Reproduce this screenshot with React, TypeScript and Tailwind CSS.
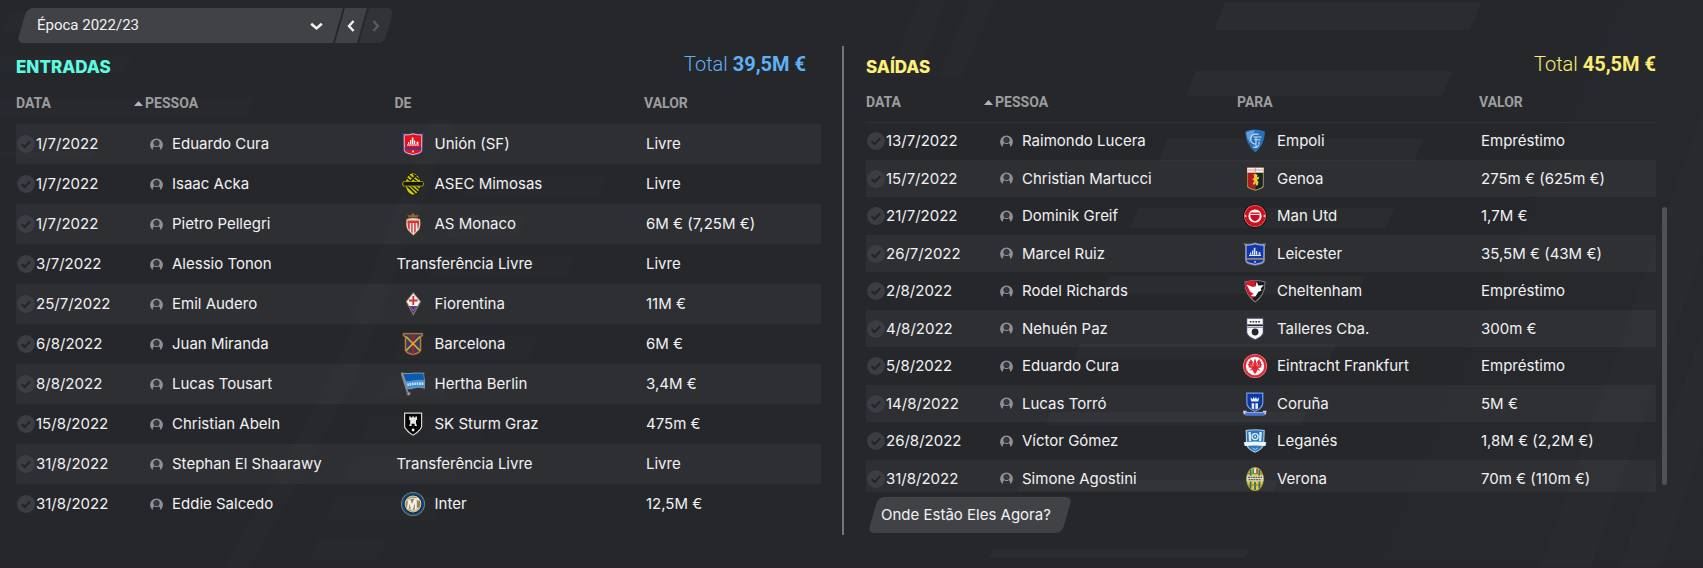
import { useState, type ReactNode } from "react";

const crests: Record<string, ReactNode> = {
  union: (
    <>
      <path d="M.6 1 Q7 2.6 12 .4 Q17 2.6 23.4 1 L21.8 4 V18.6 Q21.6 21.2 18 22.2 L12 23.8 L6 22.2 Q2.4 21.2 2.2 18.6 V4 Z" fill="#2f3fa8" />
      <path d="M3.2 2.8 Q8 3.4 12 1.8 Q16 3.4 20.8 2.8 L20.6 18.4 Q20.2 20.4 17.4 21.2 L12 22.6 L6.6 21.2 Q3.8 20.4 3.4 18.4 Z" fill="#e11219" stroke="#f3b8bd" strokeWidth="1" />
      <path d="M3.6 15.4 H20.4 V17.4 H3.6 Z" fill="#3140a6" />
      <path d="M6 13.6 V12.4 H18 V13.6 Z M7 12 V10 H8.2 V12 Z M9 12 V8 H10.2 V12 Z M10.8 12 V5.4 H12.4 V12 Z M13 12 V8.6 H14.2 V12 Z M15.6 12 V9.8 H17.4 V12 Z" fill="#fff" />
      <circle cx="12" cy="19.4" r="1" fill="#fff" />
    </>
  ),
  asec: (
    <>
      <ellipse cx="12" cy="12" rx="8" ry="11.5" fill="#1b1c08" />
      <ellipse cx="12" cy="12" rx="7.3" ry="10.7" fill="#c9c312" />
      <path d="M8 3.2 L16.5 10 M6 6 L10.5 10 M12 2 L18 7.5 M6 14 L14.5 22 M10 14 L17 20 M14.5 14 L18.5 17.5 M8.8 9.8 L15.5 2.8 M14 21.6 L7.5 15" stroke="#1b1c08" strokeWidth="1.4" fill="none" />
      <path d="M2 9.2 H22 L23 12 L22 14.4 H2 L1 12 Z" fill="#a6a010" />
      <path d="M2.4 10 H21.8 V13.6 H2.4 Z" fill="#15160a" />
    </>
  ),
  monaco: (
    <>
      <path d="M7.6 5.6 L6.4 2.8 L9.4 3.8 L12 .8 L14.6 3.8 L18 2.8 L16.6 5.6 Z" fill="#8a6a35" />
      <circle cx="9" cy="3.6" r=".9" fill="#c0342f" />
      <circle cx="15.4" cy="3.6" r=".9" fill="#c0342f" />
      <path d="M5.6 7 Q12 5.2 19 7 Q20.4 14 17.8 18 L12.3 23.6 L6.8 18 Q4.2 14 5.6 7 Z" fill="#d8c38d" />
      <path d="M6.6 8 Q12 6.6 18 8 Q19 14 17 17.4 L12.3 22.2 L7.6 17.4 Q5.6 14 6.6 8 Z" fill="#f1e9e7" />
      <path d="M6.6 8.6 H18 V11 H6.4 Z M6.6 11 H8.7 V18.4 L7.2 16.6 Z M10.2 11 H11.6 V21.4 L10.2 20 Z M13.2 11 H14.7 V19.6 L13.2 21 Z M16.2 11 H18.1 Q18 15 16.6 17.4 Z" fill="#d9323c" />
    </>
  ),
  fiorentina: (
    <>
      <path d="M12.3 0 L20.2 9.4 L12.3 23.8 L4.6 9.4 Z" fill="#8b7d62" />
      <path d="M12.3 1.4 L19 9.4 L16.4 14 H8.2 L5.8 9.4 Z" fill="#f5f2f0" />
      <path d="M8.4 14.2 H16.2 L12.3 21.8 Z" fill="#4b3a86" />
      <path d="M11.4 4 H13.2 V7.6 H16.6 V9.4 H13.2 V13 H11.4 V9.4 H8 V7.6 H11.4 Z" fill="#d92b33" />
      <path d="M9.6 15.2 L12.3 18.8 L15 15.2" stroke="#8a83a8" fill="none" strokeWidth=".8" />
    </>
  ),
  barcelona: (
    <>
      <path d="M1.6 .8 H22.2 L22.4 4 L20.6 5 V18 Q20 22.4 12 23.4 Q4 22.4 3.4 18 V5 L1.4 4 Z" fill="#8e3a44" />
      <path d="M2.8 1.8 H21 V3.8 L19.4 4.8 V17.8 Q18.6 21 12 22.2 Q5.4 21 4.6 17.8 V4.8 L2.8 3.8 Z" fill="#35405e" stroke="#b38b2c" strokeWidth="1.1" />
      <path d="M10.6 2.4 H13.4 V21.6 H10.6 Z" fill="#9c2330" />
      <path d="M5 4.6 L19 18.6 M19 4.6 L5 18.6" stroke="#d6aa2e" strokeWidth="1.6" />
    </>
  ),
  hertha: (
    <>
      <path d="M.4 1 L7 21.8" stroke="#8b9097" strokeWidth="1.6" />
      <path d="M0 .6 Q6 1.4 11 .8 Q18 .2 23.4 .8 Q22.6 4 24 8 L24 16.8 Q18 14.8 13 16.4 Q9.5 17.6 6 17.2 Z" fill="#8a8f96" />
      <path d="M2.4 1.8 Q8 2.4 12 1.8 Q18 1.2 22.4 1.8 L23 8 Q17 7 11 8.8 Q7 9.4 4.6 8.8 Z" fill="#0a5cb0" />
      <path d="M4.8 9 Q9 9.6 12 8.8 Q18 7.2 23 8.6 L23.2 15.2 Q17 14 12.4 15.6 Q9 16.6 6.8 16 Z" fill="#3f92d8" />
      <path d="M6.4 12.8 Q12 11.4 22.4 11.6" stroke="#cfe6f7" strokeWidth="2.6" strokeDasharray="1.6 .8" fill="none" />
      <circle cx="7.6" cy="21.6" r="2.1" fill="#6d7277" />
      <circle cx="7.6" cy="21.6" r=".9" fill="#b9bcc0" />
    </>
  ),
  sturm: (
    <>
      <path d="M3 .6 H21.2 V15 Q19 20 12.1 23.8 Q5.2 20 3 15 Z" fill="#d6d6d6" />
      <path d="M4.2 1.8 H20 V14.8 Q17.8 19.2 12.1 22.4 Q6.4 19.2 4.2 14.8 Z" fill="#050505" />
      <path d="M8.2 4.4 H9.8 V5.6 H11.2 V4.4 H13 V5.6 H14.4 V4.4 H16 V8 H15 V11.4 L16.2 14 H13.6 V11.8 H10.6 V14 H8 L9.2 11.4 V8 H8.2 Z" fill="#e6e6e6" />
      <circle cx="12.1" cy="18" r="1.4" fill="#f2f2f2" />
    </>
  ),
  inter: (
    <>
      <circle cx="12" cy="12" r="12" fill="#8f8a6b" />
      <circle cx="12" cy="12" r="11.2" fill="#0b4d8a" />
      <circle cx="12" cy="12" r="9.4" fill="#15202d" />
      <circle cx="12" cy="12" r="8.4" fill="#d8cfb6" />
      <circle cx="12" cy="12" r="7.4" fill="#93845d" />
      <path d="M6 16.4 L7 7.4 H9.4 L11 12 L13.6 6 H18 V8 H15.8 V18.6 H13.8 V11 L11.8 17.6 H10 L8.6 11.6 L7.8 17.4 Z" fill="#f4f0e4" />
      <path d="M6 8.6 Q12 3.6 18 8.6 M6.4 15.6 Q12 21 17.6 15.6" stroke="#e4dcc6" strokeWidth="1.1" fill="none" />
    </>
  ),
  empoli: (
    <>
      <path d="M2.2 2.6 Q12 -1.4 22 2.6 Q21.6 16 12.4 23.6 Q3 16 2.2 2.6 Z" fill="#2a6fb8" />
      <path d="M3.2 3.4 Q8 1 12 1.2 L7 14 Q3.6 9 3.2 3.4 Z" fill="#5fa2dc" />
      <path d="M15.6 5.4 Q8 4 7.6 9.6 Q7.6 15 13 15.2 M10.4 8 H18.4 M11.2 10.8 H17.6 M13 8 V19 M10 17.8 Q13 19.6 15.8 16.4 M16 12.6 V15.8" stroke="#c4def3" strokeWidth="1.1" fill="none" />
    </>
  ),
  genoa: (
    <>
      <path d="M4 .6 H20.8 V19.4 Q20 21.8 12.3 23.8 Q4.6 21.8 4 19.4 Z" fill="#a79043" />
      <path d="M4.2 .8 H20.6 V5.4 H4.2 Z" fill="#f4eeee" />
      <path d="M4.2 3 H20.6 M12.3 .8 V5" stroke="#e0888c" strokeWidth=".9" />
      <path d="M4.8 6 H12.3 V22.6 Q5.4 20.8 4.8 18.8 Z" fill="#ae1b22" />
      <path d="M12.3 6 H19.8 V18.8 Q19.2 20.8 12.3 22.6 Z" fill="#0e2430" />
      <path d="M10.6 7.6 L12.4 6.8 L14.6 8 L14 10.2 L16.4 9.6 L15.6 12.2 L14 12.8 L15.6 15.2 L14.6 18.4 H12.8 L13 16 L11 18 L9.6 16.4 L11.6 14 L9.2 12.2 L11.2 11 Z" fill="#f0c62d" />
    </>
  ),
  manutd: (
    <>
      <circle cx="12" cy="12" r="12" fill="#191214" />
      <circle cx="12" cy="12" r="11" fill="#e06a72" />
      <circle cx="12" cy="12" r="10.3" fill="#cf0f1d" />
      <circle cx="12" cy="12" r="6.6" fill="#fff" />
      <path d="M7.4 8.4 H16.6 V13 Q16 15.8 12 17.2 Q8 15.8 7.4 13 Z" fill="#cf0f1d" />
      <path d="M7.2 10.4 H16.8" stroke="#fff" strokeWidth="1" />
      <path d="M1.8 12 H3.4 M20.6 12 H22.2" stroke="#fff" strokeWidth="1.4" />
    </>
  ),
  leicester: (
    <>
      <path d="M.4 1.2 Q6.6 2.4 12 .4 Q17.4 2.4 23.2 1.2 L21.8 4.6 V18.4 Q21.6 21.2 18.4 22.2 L12 23.8 L5.6 22.2 Q2.4 21.2 2.2 18.4 V4.6 Z" fill="#81806f" />
      <path d="M3 3.2 Q8 3.4 12 1.8 Q16 3.4 21 3.2 L20.8 18.4 Q20.4 20.2 18 21 L12 22.4 L6 21 Q3.6 20.2 3.2 18.4 Z" fill="#1236ad" stroke="#a9b9e6" strokeWidth="1" />
      <path d="M3.6 16.2 H20.4 V17.6 H3.6 Z" fill="#b79a58" />
      <path d="M6 14 V12.8 H18 V14 Z M7 12.4 V10.4 H8.2 V12.4 Z M9 12.4 V8.4 H10.2 V12.4 Z M10.8 12.4 V5.8 H12.4 V12.4 Z M13 12.4 V9 H14.2 V12.4 Z M15.6 12.4 V10.2 H17.4 V12.4 Z" fill="#dfe7fa" />
      <circle cx="12" cy="19.8" r=".9" fill="#dfe7fa" />
    </>
  ),
  cheltenham: (
    <>
      <path d="M1.6 2.6 Q12 -.8 22.4 2.6 Q23 16 12.2 23.6 Q1.2 16 1.6 2.6 Z" fill="#8f8f92" />
      <path d="M2.4 3.2 Q12 .2 21.6 3.2 Q22 15 12.2 22.4 Q2 15 2.4 3.2 Z" fill="#1c1a1e" />
      <path d="M2.4 3.2 Q8 1.4 13 1.6 L12 7 L13.6 14 L9.6 20 Q2 13 2.4 3.2 Z" fill="#e01428" />
      <path d="M3.6 5.4 L9.6 8 L12.4 7.6 L13.8 2.4 L15.2 6.6 L20.8 6.2 L17.6 9.4 L18.6 11.4 L15.4 12.8 L12.4 17.6 L7.8 17 L10.6 14.6 Q6.6 13 5.8 9.8 Z" fill="#fff" />
    </>
  ),
  talleres: (
    <>
      <path d="M3 .6 H21 V16.4 Q20 20.4 12.1 23.6 Q4.2 20.4 3 16.4 Z" fill="#3b4257" />
      <path d="M4.2 1.8 H19.8 V15.8 Q19 19.6 12.1 22.2 Q5.2 19.6 4.2 15.8 Z" fill="#f6f6f6" />
      <path d="M4.2 7.4 H19.8 V9 H4.2 Z" fill="#23273a" />
      <path d="M4.2 9.6 H19.8 V11 H4.2 Z" fill="#8e93a4" />
      <path d="M6.8 4.8 H17.6" stroke="#2a2d38" strokeWidth="1.4" strokeDasharray="1.6 1.2" />
      <circle cx="12.1" cy="15" r="3.4" fill="#23262b" />
    </>
  ),
  frankfurt: (
    <>
      <circle cx="12" cy="12" r="12" fill="#f08087" />
      <circle cx="12" cy="12" r="11.2" fill="#e32632" />
      <circle cx="12" cy="12" r="9.2" fill="#fff" />
      <path d="M12 4.6 L13.2 7.4 L12.8 10 L15 6.4 L16.8 5 L16.8 7.4 L18.6 7.4 L17.8 9.6 L19.4 10.4 L18 12 L18.8 13.2 L15 14 L17.6 17 L14.4 15.8 L13.6 18 L12 20 L10.4 18 L9.6 15.8 L6.4 17 L9 14 L5.2 13.2 L6 12 L4.6 10.4 L6.2 9.6 L5.4 7.4 L7.2 7.4 L7.2 5 L9 6.4 L11.2 10 L10.8 7.4 Z" fill="#e32632" />
      <path d="M9.2 8.6 L10.4 12 M14.8 8.6 L13.6 12 M7.4 10.6 L9 12.6 M16.6 10.6 L15 12.6" stroke="#fff" strokeWidth=".6" />
    </>
  ),
  coruna: (
    <>
      <path d="M3.2 .6 H20.4 V11 Q20 17 11.8 20 Q3.6 17 3.2 11 Z" fill="#7f9de0" />
      <path d="M4.4 1.8 H19.2 V11 Q18.8 16 11.8 18.8 Q4.8 16 4.4 11 Z" fill="#0b38a8" />
      <path d="M7.4 5.2 L9.6 7.2 L10.6 4.8 L11.8 7 L13 4.8 L14 7.2 L16.2 5.2 L15.4 9.6 H8.2 Z M8.6 11.2 H11.2 V17.6 L8.8 16.4 Z M12.4 11.2 H15 V16.4 L12.4 17.6 Z" fill="#e6edfa" />
      <path d="M0 18.8 H3.6 V22.4 H.8 Z M23.6 18.8 H20 V22.4 H22.8 Z" fill="#c8d0e2" />
      <path d="M2.4 20.2 H21.4 V23.8 H2.4 Z" fill="#4a74cc" />
      <path d="M2.6 20.4 H21.2" stroke="#a9bfec" strokeWidth=".8" />
    </>
  ),
  leganes: (
    <>
      <path d="M2.6 1 Q12 -.6 21.8 1 L21.2 15 Q20 20.6 12.1 23.8 Q4 20.6 3 15 Z" fill="#a9cbe6" />
      <path d="M3.8 2 Q12 .6 20.6 2 L20 15 Q19.2 19.6 12.1 22.6 Q5 19.6 4.2 15 Z" fill="#2d78bd" />
      <path d="M5.4 3 H7.8 L8.2 12 H6 Z M16.4 3 H18.8 L18.2 12 H16 Z" fill="#d9eaf6" />
      <circle cx="12.1" cy="7.6" r="3" fill="none" stroke="#d9eaf6" strokeWidth="1.3" />
      <circle cx="12.1" cy="7.6" r="1" fill="#d9eaf6" />
      <path d="M.8 13.2 Q12 12 23.4 13.2 L22.4 17 Q12 16 1.8 17 Z" fill="#eef3f8" />
      <path d="M9.4 19 L12.1 20.6 L14.8 19" stroke="#a9cbe6" strokeWidth="1" fill="none" />
    </>
  ),
  verona: (
    <>
      <ellipse cx="12" cy="12" rx="8.8" ry="12" fill="#a59a3a" />
      <ellipse cx="12" cy="12" rx="8" ry="11.2" fill="#e2c92c" />
      <path d="M7.6 2.8 V21.4 M12 15 V23 M16.4 2.8 V21.4" stroke="#32608a" strokeWidth="1.7" />
      <path d="M5 6.6 H19 M5.4 18 H18.6" stroke="#5e8a3c" strokeWidth="1" />
      <path d="M9.4 1.4 H14.8 V6 H9.4 Z" fill="#ece9dc" />
      <path d="M9.4 1.4 H11 V6 H9.4 Z" fill="#3f8a48" />
      <path d="M13.2 1.4 H14.8 V6 H13.2 Z" fill="#c23b35" />
      <path d="M3.6 8.6 H20.4 V14.4 H3.6 Z" fill="#d9d6c6" />
      <path d="M5 10.4 H19 M5.6 12.6 H18.4" stroke="#5c5b52" strokeWidth="1.2" strokeDasharray="1.8 .7" />
    </>
  ),
};

type Transfer = { date: string; name: string; club: string; crest?: string; value: string };

const arrivals: Transfer[] = [
  { date: "1/7/2022", name: "Eduardo Cura", club: "Unión (SF)", crest: "union", value: "Livre" },
  { date: "1/7/2022", name: "Isaac Acka", club: "ASEC Mimosas", crest: "asec", value: "Livre" },
  { date: "1/7/2022", name: "Pietro Pellegri", club: "AS Monaco", crest: "monaco", value: "6M € (7,25M €)" },
  { date: "3/7/2022", name: "Alessio Tonon", club: "Transferência Livre", value: "Livre" },
  { date: "25/7/2022", name: "Emil Audero", club: "Fiorentina", crest: "fiorentina", value: "11M €" },
  { date: "6/8/2022", name: "Juan Miranda", club: "Barcelona", crest: "barcelona", value: "6M €" },
  { date: "8/8/2022", name: "Lucas Tousart", club: "Hertha Berlin", crest: "hertha", value: "3,4M €" },
  { date: "15/8/2022", name: "Christian Abeln", club: "SK Sturm Graz", crest: "sturm", value: "475m €" },
  { date: "31/8/2022", name: "Stephan El Shaarawy", club: "Transferência Livre", value: "Livre" },
  { date: "31/8/2022", name: "Eddie Salcedo", club: "Inter", crest: "inter", value: "12,5M €" },
];

const departures: Transfer[] = [
  { date: "13/7/2022", name: "Raimondo Lucera", club: "Empoli", crest: "empoli", value: "Empréstimo" },
  { date: "15/7/2022", name: "Christian Martucci", club: "Genoa", crest: "genoa", value: "275m € (625m €)" },
  { date: "21/7/2022", name: "Dominik Greif", club: "Man Utd", crest: "manutd", value: "1,7M €" },
  { date: "26/7/2022", name: "Marcel Ruiz", club: "Leicester", crest: "leicester", value: "35,5M € (43M €)" },
  { date: "2/8/2022", name: "Rodel Richards", club: "Cheltenham", crest: "cheltenham", value: "Empréstimo" },
  { date: "4/8/2022", name: "Nehuén Paz", club: "Talleres Cba.", crest: "talleres", value: "300m €" },
  { date: "5/8/2022", name: "Eduardo Cura", club: "Eintracht Frankfurt", crest: "frankfurt", value: "Empréstimo" },
  { date: "14/8/2022", name: "Lucas Torró", club: "Coruña", crest: "coruna", value: "5M €" },
  { date: "26/8/2022", name: "Víctor Gómez", club: "Leganés", crest: "leganes", value: "1,8M € (2,2M €)" },
  { date: "31/8/2022", name: "Simone Agostini", club: "Verona", crest: "verona", value: "70m € (110m €)" },
];

function Backdrop() {
  const bars = Array.from({ length: 9 }, (_, i) => ({ x: 1225 - i * 29, y: Math.round(3 + i * 68.2), h: 27 - i * 2.3 }));
  const faint = [
    [10, 12, 283, 21], [-40, 55, 172, 18], [-40, 98, 295, 18], [-40, 152, 135, 6],
    [470, 175, 138, 22], [455, 216, 72, 22], [437, 255, 138, 23], [402, 336, 136, 23],
    [388, 376, 63, 22], [370, 416, 120, 23], [353, 457, 110, 23], [335, 497, 110, 23], [318, 538, 69, 22],
  ];
  const slab = (x: number, y: number, w: number, h: number) =>
    `M${x} ${y} H${x + w} L${x + w - h * 0.4} ${y + h} H${x - h * 0.4} Z`;
  return (
    <svg aria-hidden="true" className="pointer-events-none absolute inset-0 h-full w-full" viewBox="0 0 1703 568" preserveAspectRatio="xMinYMin slice">
      <g fill="#fff">
        <path d="M1618 0 H1703 V568 H1375 Z" fillOpacity=".008" />
        <path d="M1703 110 L1540 568 H1590 L1703 250 Z M1703 330 L1620 568 H1660 L1703 440 Z" fillOpacity=".012" />
        <path d="M330 380 L430 120 H455 L355 380 L250 568 H223 Z" fillOpacity=".012" />
        <path d="M918 0 H945 L918 77 H888 Z M970 0 H996 L962 77 H938 Z" fillOpacity=".012" />
        {faint.map(([x, y, w, h]) => <path key={y} d={slab(x, y, w, h)} fillOpacity=".012" />)}
        {bars.map((b) => <path key={b.y} d={slab(b.x, b.y, 256, b.h)} fillOpacity=".027" />)}
      </g>
    </svg>
  );
}

function PersonIcon() {
  return (
    <svg aria-hidden="true" className="size-[13px] shrink-0" viewBox="0 0 13 13">
      <path d="M2.6 11.9 A6.4 6.4 0 1 1 10.4 11.9 Q10.2 8.6 8.2 7.7 A3.1 3.1 0 1 0 4.8 7.7 Q2.8 8.6 2.6 11.9 Z" fill="#8f9093" />
      <circle cx="6.5" cy="5.1" r="2.3" fill="#38393d" />
      <path d="M4.8 7.4 Q6.5 8.4 8.2 7.4 L8.6 8.4 Q6.5 9.4 4.4 8.4 Z" fill="#8f9093" />
    </svg>
  );
}

function CheckIcon() {
  return (
    <svg aria-hidden="true" className="size-[18px] shrink-0" viewBox="0 0 18 18">
      <circle cx="9" cy="9" r="9" fill="#3c3d41" />
      <path d="M4.6 9.2 L7.6 12 L13.2 6.2" fill="none" stroke="#232428" strokeWidth="2" />
    </svg>
  );
}

type TableProps = {
  title: string;
  clubLabel: string;
  rows: Transfer[];
  headClass: string;
  headRowClass: string;
  rowClass: string;
};

function TransferTable({ title, clubLabel, rows, headClass, headRowClass, rowClass }: TableProps) {
  return (
    <table aria-label={title} className="w-full table-fixed border-collapse text-left">
      <thead className={headClass}>
        <tr className={`text-[14px] leading-5 text-[#9c9d9f] ${headRowClass}`}>
          <th scope="col" aria-sort="ascending" className="w-[129px] p-0 font-bold">
            <span className="flex items-center justify-between pr-[2px]">
              DATA
              <svg aria-hidden="true" className="h-[5px] w-[9px]" viewBox="0 0 9 5"><path d="M4.5 0 L9 5 H0 Z" fill="#b4b5b7" /></svg>
            </span>
          </th>
          <th scope="col" className="p-0 font-bold">PESSOA</th>
          <th scope="col" className="p-0 font-bold">{clubLabel}</th>
          <th scope="col" className="w-[177px] p-0 font-bold">VALOR</th>
        </tr>
      </thead>
      <tbody className="font-[Inter,sans-serif] text-[15px] leading-5 text-[#f2f2f3]">
        {rows.map((row) => (
          <tr key={row.date + row.name} className={rowClass}>
            <td className="p-0"><span className="flex items-center gap-[1px] pl-[1px]"><CheckIcon />{row.date}</span></td>
            <td className="p-0"><span className="flex items-center gap-[9px] pl-[5px]"><PersonIcon />{row.name}</span></td>
            <td className="p-0">
              {row.crest ? (
                <span className="flex items-center gap-[10px] pl-[6px]">
                  <svg aria-hidden="true" className="size-6 shrink-0" viewBox="0 0 24 24">{crests[row.crest]}</svg>
                  {row.club}
                </span>
              ) : (
                <span className="pl-[2px]">{row.club}</span>
              )}
            </td>
            <td className="p-0 pl-[2px]">{row.value}</td>
          </tr>
        ))}
      </tbody>
    </table>
  );
}

type HeadingProps = { title: string; total: string; titleClass: string; totalClass: string };

function PanelHeading({ title, total, titleClass, totalClass }: HeadingProps) {
  return (
    <div className="flex h-[37px] items-start justify-between">
      <h2 className={`pt-[9px] font-[Inter,sans-serif] text-[17px] leading-6 font-extrabold ${titleClass}`}>{title}</h2>
      <p className={`pt-[6px] text-[20px] leading-6 font-light ${totalClass}`}>Total <strong className="font-bold">{total}</strong></p>
    </div>
  );
}

export default function App() {
  const [season, setSeason] = useState("2022");
  return (
    <main className="relative min-h-screen overflow-hidden border-b border-[#33202c] bg-[#26272b] font-[Roboto,sans-serif] text-[#f2f2f3]">
      <Backdrop />
      <div className="relative flex gap-[2px] pt-2 pl-[22px]">
        <div className="relative h-[35px] w-[316px]">
          <span className="absolute inset-0 -skew-x-[16deg] rounded-l-md bg-[#414246]" />
          <select aria-label="Época" value={season} onChange={(e) => setSeason(e.target.value)} className="relative block h-[33px] w-full appearance-none bg-transparent pl-[15px] font-[Roboto,sans-serif] text-[15px] leading-6 text-[#f2f2f3] outline-none">
            <option value="2022">Época 2022/23</option>
          </select>
          <svg aria-hidden="true" className="pointer-events-none absolute top-[14px] right-[15px] h-[9px] w-[13px]" viewBox="0 0 13 9">
            <path d="M1.2 1.8 L6.5 6.4 L11.8 1.8" fill="none" stroke="#f2f2f3" strokeWidth="2.6" />
          </svg>
        </div>
        <button type="button" aria-label="Época anterior" className="relative flex h-[35px] w-[22px] items-center justify-center">
          <span className="absolute inset-0 -skew-x-[16deg] bg-[#414246]" />
          <svg aria-hidden="true" className="relative h-3 w-2" viewBox="0 0 8 12"><path d="M6.6 1 L2 6 L6.6 11" fill="none" stroke="#f2f2f3" strokeWidth="2.4" /></svg>
        </button>
        <button type="button" disabled aria-label="Época seguinte" className="relative flex h-[35px] w-[25px] items-center justify-start pl-[8px]">
          <span className="absolute inset-0 -skew-x-[16deg] rounded-r-md bg-[#323337]" />
          <svg aria-hidden="true" className="relative h-3 w-2" viewBox="0 0 8 12"><path d="M1.4 1 L6 6 L1.4 11" fill="none" stroke="#5c5d60" strokeWidth="2.2" /></svg>
        </button>
      </div>

      <div className="relative grid grid-cols-[842fr_2px_859fr] pt-[3px] pb-8">
        <section className="pr-[21px] pl-4">
          <div className="pr-[15px]">
            <PanelHeading title="ENTRADAS" total="39,5M €" titleClass="text-[#5cfbe0]" totalClass="text-[#5fb0f5]" />
          </div>
          <TransferTable title="ENTRADAS" clubLabel="DE" rows={arrivals} headClass="border-b border-transparent" headRowClass="h-[41px]" rowClass="h-10 odd:bg-white/4" />
        </section>
        <div className="bg-[#737478]" />
        <section className="flex flex-col items-start pr-[36px] pb-[2px] pl-[22px]">
          <div className="w-full pr-[11px]">
            <PanelHeading title="SAÍDAS" total="45,5M €" titleClass="text-[#fdf07a]" totalClass="text-[#fbed72]" />
          </div>
          <div className="flex w-full gap-[6px]">
            <div className="max-h-[409px] flex-1 overflow-hidden">
              <TransferTable title="SAÍDAS" clubLabel="PARA" rows={departures} headClass="border-b border-white/5" headRowClass="h-[39px]" rowClass="h-[38px] even:h-[37px] even:bg-white/4" />
            </div>
            <div className="flex w-[5px] flex-col justify-end pb-[7px]">
              <div className="h-[278px] rounded-full bg-[#505155]" />
            </div>
          </div>
          <button type="button" className="relative mt-[5px] ml-[7px] h-9 min-w-[194px] px-2 text-left font-[Inter,sans-serif] text-[15px] leading-5 whitespace-nowrap">
            <span className="absolute inset-0 -skew-x-[16deg] rounded-md bg-[#414246]" />
            <span className="relative">Onde Estão Eles Agora?</span>
          </button>
        </section>
      </div>
    </main>
  );
}
